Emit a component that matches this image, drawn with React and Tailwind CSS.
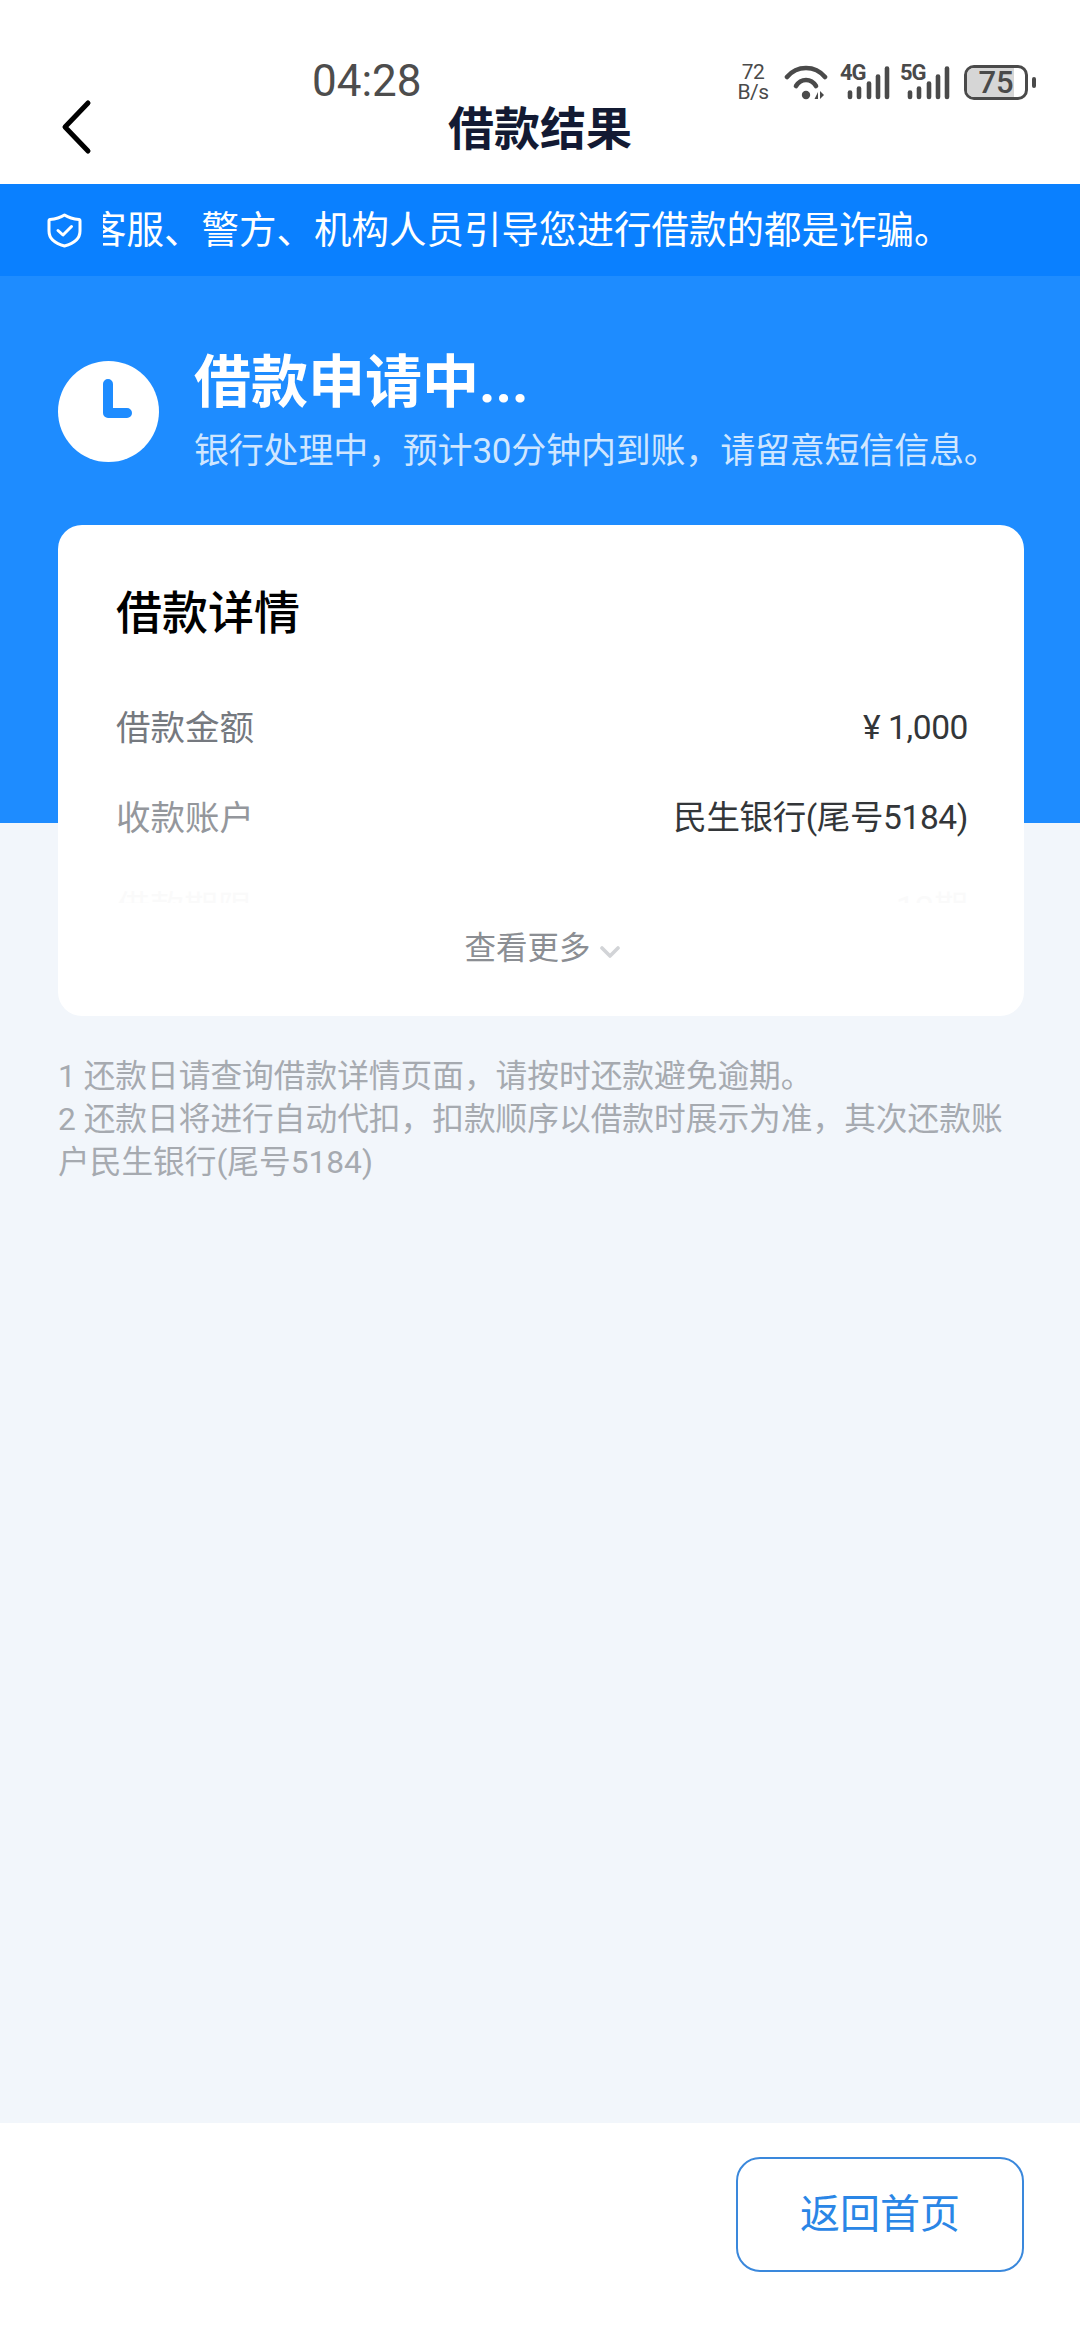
const CJK = "font-['Roboto','Noto_Sans_CJK_SC',sans-serif]";

function Bars({ label }) {
  return (
    <div className="relative w-[51px] h-[36px]">
      <span className="absolute left-0 top-[-3px] text-[22px] leading-[24px] font-bold tracking-[-1px] text-[#4a4a4a] font-['Roboto',sans-serif]">{label}</span>
      <svg width="51" height="36" viewBox="0 0 51 36" className="absolute left-0 top-0">
        <g stroke="#4a4a4a" strokeWidth="4.6" strokeLinecap="round">
          <line x1="10" y1="28.5" x2="10" y2="33" />
          <line x1="19" y1="24.5" x2="19" y2="33" />
          <line x1="29" y1="19.5" x2="29" y2="33" />
          <line x1="38" y1="12.5" x2="38" y2="33" />
          <line x1="47" y1="4.5" x2="47" y2="33" />
        </g>
      </svg>
    </div>
  );
}

function StatusBar() {
  return (
    <div className="flex items-start h-[68px]">
      <div className="ml-[312px] mt-[12px] text-[44px] leading-[46px] text-[#4d4d4d] font-['Roboto',sans-serif]">04:28</div>
      <div className="ml-auto mr-[44px] mt-[16px] flex items-center">
        <div className="w-[38px] text-center text-[#4a4a4a] text-[21px] leading-[20px] font-['Roboto',sans-serif] tracking-[-0.5px]">
          <div>72</div>
          <div>B/s</div>
        </div>
        <svg width="44" height="36" viewBox="0 0 44 36" className="ml-[12px]">
          <g fill="none" stroke="#4a4a4a" strokeWidth="4.6" strokeLinecap="round">
            <path d="M3 13C13 1 31 1 41 13" />
            <path d="M12 22C17 14 27 14 32 22" />
          </g>
          <circle cx="22" cy="31" r="4.2" fill="#4a4a4a" />
          <path d="M34 28v7h-3.5zM36 27v8l4-4z" fill="#4a4a4a" />
        </svg>
        <div className="ml-[12px]"><Bars label="4G" /></div>
        <div className="ml-[9px]"><Bars label="5G" /></div>
        <div className="flex items-center gap-[4px] ml-[13px]">
          <div className="relative w-[64px] h-[35px] rounded-[10px] border-[3px] border-[#4a4a4a] overflow-hidden">
            <div className="absolute left-0 top-0 bottom-0 w-[47px] bg-[#d6d6d6]" />
            <div className="relative text-center text-[31px] leading-[29px] font-medium text-[#4a4a4a] font-['Roboto',sans-serif]">75</div>
          </div>
          <div className="w-[4px] h-[11px] rounded-[2px] bg-[#4a4a4a]" />
        </div>
      </div>
    </div>
  );
}

function Header() {
  return (
    <header className="bg-white h-[184px] pt-[46px]">
      <StatusBar />
      <div className="relative h-[70px] -mt-[20px] flex items-center justify-center">
        <svg width="36" height="56" viewBox="0 0 36 56" className="absolute left-[60px] top-[5px]">
          <path d="M28 4L5 28L28 52" fill="none" stroke="#000" strokeWidth="5" strokeLinecap="round" strokeLinejoin="round" />
        </svg>
        <h1 className="text-[46px] leading-[60px] font-bold text-[#131a33]">借款结果</h1>
      </div>
    </header>
  );
}

function Notice() {
  return (
    <div className="h-[92px] bg-[#0a80ff] flex items-center pl-[47px]">
      <svg width="35" height="35" viewBox="0 0 35 35" className="shrink-0">
        <path d="M17.5 2C21.5 4.6 26 6 32 6.4C33 6.5 33 7 33 8V18C33 25.5 27 30.5 17.5 33C8 30.5 2 25.5 2 18V8C2 7 2 6.5 3 6.4C9 6 13.5 4.6 17.5 2Z" fill="none" stroke="#fff" strokeWidth="3" strokeLinejoin="round" />
        <path d="M11 17.5L16 22L24.5 13.5" fill="none" stroke="#fff" strokeWidth="3" strokeLinecap="round" strokeLinejoin="round" />
      </svg>
      <div className="ml-[21px] flex-1 overflow-hidden">
        <div className="-ml-[14px] whitespace-nowrap text-[37.5px] leading-[50px] text-white">客服、警方、机构人员引导您进行借款的都是诈骗。</div>
      </div>
    </div>
  );
}

function Row({ label, value, labelColor }) {
  return (
    <div className="flex items-center justify-between h-[90px]">
      <span className={`text-[34.5px] leading-[50px] ${labelColor}`}>{label}</span>
      <span className="text-[33.5px] leading-[50px] tracking-[-0.4px] text-[#333639]">{value}</span>
    </div>
  );
}

function Card() {
  return (
    <section className="bg-white rounded-[24px] h-[491px] pl-[58px] pr-[56px] pt-[56px]">
      <h2 className="text-[46px] leading-[64px] text-black font-medium">借款详情</h2>
      <div className="mt-[38px]">
        <Row label="借款金额" value="¥ 1,000" labelColor="text-[#75797f]" />
        <Row label="收款账户" value="民生银行(尾号5184)" labelColor="text-[#94979c]" />
        <div className="mt-[20px] flex justify-between items-start h-[20px] overflow-hidden opacity-[0.03] text-[34px] leading-[50px] text-[#75797f]">
          <span>借款期限</span>
          <span>12期</span>
        </div>
      </div>
      <div className="mt-[23px] flex items-center justify-center gap-[9px]">
        <span className="text-[31.5px] leading-[46px] text-[#8b8e93]">查看更多</span>
        <svg width="20" height="12" viewBox="0 0 20 12" className="mt-[6px]">
          <path d="M2 2L10 10L18 2" fill="none" stroke="#d2d4d7" strokeWidth="3.6" strokeLinecap="round" strokeLinejoin="round" />
        </svg>
      </div>
    </section>
  );
}

export default function App() {
  return (
    <div className={`w-[1080px] h-[2340px] flex flex-col bg-[#f2f6fb] ${CJK}`}>
      <Header />
      <Notice />
      <main className="flex-1">
        <div className="bg-[#1e8cff] h-[547px] pl-[58px] pr-[56px] pt-[69px]">
          <div className="flex items-start gap-[35px]">
            <div className="shrink-0 mt-[16px] w-[101px] h-[101px] rounded-full bg-white flex items-center justify-center">
              <svg width="101" height="101" viewBox="0 0 101 101">
                <path d="M50 23V52H69" fill="none" stroke="#1e8cff" strokeWidth="10" strokeLinecap="round" strokeLinejoin="round" />
              </svg>
            </div>
            <div>
              <div className="text-[57px] leading-[76px] font-bold text-white">借款申请中...</div>
              <div className="mt-[6px] text-[35px] leading-[50px] tracking-[-0.2px] text-[#cfe6ff] whitespace-nowrap">银行处理中，预计30分钟内到账，请留意短信信息。</div>
            </div>
          </div>
          <div className="mt-[48px]">
            <Card />
          </div>
        </div>
        <div className="mt-[232px] pl-[58px] pr-[60px] text-[31.7px] leading-[43px] text-[#a6aab0]">
          <p>1 还款日请查询借款详情页面，请按时还款避免逾期。</p>
          <p>2 还款日将进行自动代扣，扣款顺序以借款时展示为准，其次还款账户民生银行(尾号5184)</p>
        </div>
      </main>
      <footer className="h-[217px] bg-white flex justify-end pt-[34px] pr-[56px]">
        <button className="w-[288px] h-[115px] rounded-[24px] border-2 border-[#3a88dc] text-[40px] text-[#2a86e6]">返回首页</button>
      </footer>
    </div>
  );
}
